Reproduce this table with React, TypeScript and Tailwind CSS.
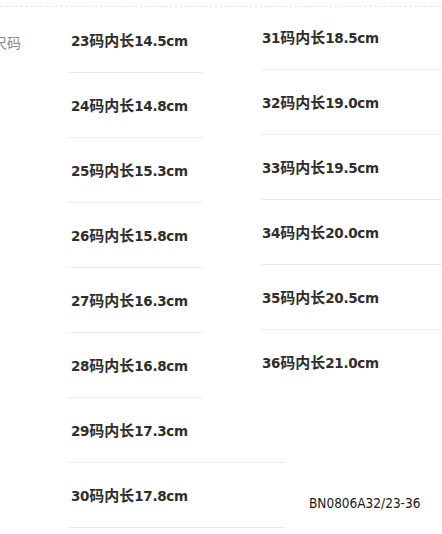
import React from 'react';

const leftRows = [
  { n: 23, len: '14.5', wide: false },
  { n: 24, len: '14.8', wide: false },
  { n: 25, len: '15.3', wide: false },
  { n: 26, len: '15.8', wide: false },
  { n: 27, len: '16.3', wide: false },
  { n: 28, len: '16.8', wide: false },
  { n: 29, len: '17.3', wide: true },
  { n: 30, len: '17.8', wide: true },
];

const rightRows = [
  { n: 31, len: '18.5' },
  { n: 32, len: '19.0' },
  { n: 33, len: '19.5' },
  { n: 34, len: '20.0' },
  { n: 35, len: '20.5' },
  { n: 36, len: '21.0' },
];

function SizeLabel({ n, len }: { n: number; len: string }) {
  return (
    <span className="whitespace-nowrap text-[13.5px] tracking-[-0.3px] font-bold text-[#2e2e2e] [font-family:'DejaVu_Sans','Noto_Sans_CJK_SC',sans-serif]">
      {n}
      <span className="text-[15px] tracking-normal [font-family:'Noto_Sans_CJK_SC',sans-serif]">码内长</span>
      {len}cm
    </span>
  );
}

export default function App() {
  return (
    <div className="w-[442px] h-[534px] overflow-hidden bg-white">
      {/* top dashed rule */}
      <div className="mt-[6px] border-t border-dashed border-[#e6e6e6]" />

      <div className="flex">
        {/* left gutter label */}
        <div className="w-[68px] shrink-0">
          <div className="mt-[25px] -ml-[7px] whitespace-nowrap text-[14px] leading-5 text-[#8a8a8a] [font-family:'Noto_Sans_CJK_SC',sans-serif]">
            尺码
          </div>
        </div>

        {/* left column */}
        <div className="w-[193px] shrink-0 pt-[1px]">
          {leftRows.map((r) => (
            <div key={r.n}>
              <div className="h-[64px] flex items-center pl-[3px]">
                <SizeLabel n={r.n} len={r.len} />
              </div>
              <div className={`h-px bg-[#ececec] ${r.wide ? 'w-[217px]' : 'w-[135px]'}`} />
            </div>
          ))}
        </div>

        {/* right column */}
        <div className="flex-1 -mt-[2px]">
          {rightRows.map((r, i) => (
            <div key={r.n}>
              <div className="h-[64px] flex items-center pl-[1px]">
                <SizeLabel n={r.n} len={r.len} />
              </div>
              {i < rightRows.length - 1 ? (
                <div className="h-px bg-[#ececec]" />
              ) : (
                <div className="h-px" />
              )}
            </div>
          ))}
          <div className="mt-[100px] pl-[48px] text-[13.5px] leading-4 text-[#1a1a1a] [font-family:'DejaVu_Sans_Condensed','DejaVu_Sans',sans-serif]">
            BN0806A32/23-36
          </div>
        </div>
      </div>
    </div>
  );
}
